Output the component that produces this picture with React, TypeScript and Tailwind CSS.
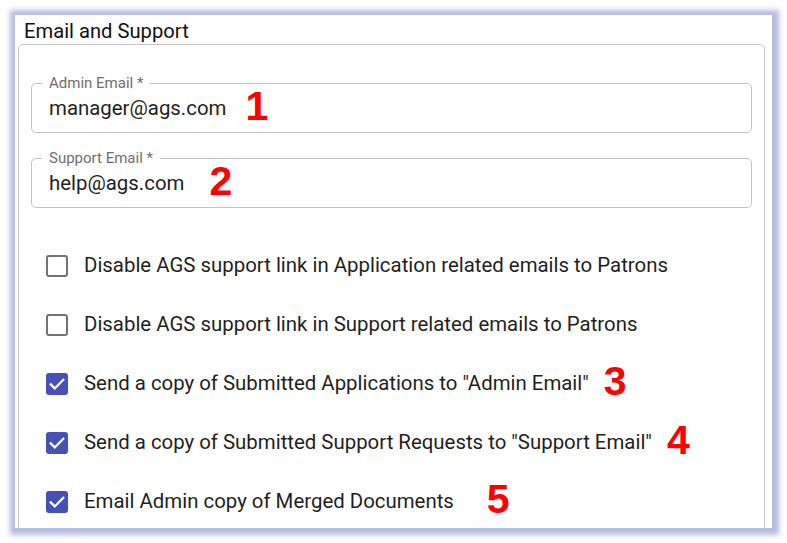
import React from "react";

const font = { fontFamily: "Roboto, 'Liberation Sans', sans-serif" };

function Box({ checked }: { checked: boolean }) {
  if (checked) {
    return (
      <div className="w-[22px] h-[22px] rounded-[3px] bg-[#4750b7] flex items-center justify-center shrink-0">
        <svg width="20" height="20" viewBox="0 0 24 24">
          <path d="M4.5 12.5l4.8 4.8L19.5 7" fill="none" stroke="white" strokeWidth="2.7" strokeLinecap="square" />
        </svg>
      </div>
    );
  }
  return <div className="w-[22px] h-[22px] rounded-[3px] border-2 border-[#737373] shrink-0" />;
}

function Num({ n, ml }: { n: string; ml: string }) {
  return (
    <span
      className={`text-[#ff0000] font-bold text-[41px] leading-none -mt-[4px] ${ml}`}
      style={{ fontFamily: "'Liberation Sans', Arial, sans-serif" }}
    >
      {n}
    </span>
  );
}

function Field({ label, value, num, ml }: { label: string; value: string; num: string; ml: string }) {
  return (
    <div className="relative h-[50px] border border-[#c4c4c4] rounded-[5px] flex items-center pl-[17px]">
      <span className="absolute -top-[10px] left-[10px] px-[7px] bg-white text-[15px] leading-[18px] text-[#6f6f6f]">
        {label}
      </span>
      <span className="text-[20.4px] text-[#1f1f1f] leading-none">{value}</span>
      <Num n={num} ml={ml} />
    </div>
  );
}

function Row({ checked, text, num, ml }: { checked: boolean; text: string; num?: string; ml?: string }) {
  return (
    <div className="h-[59px] flex items-center pl-[15px]">
      <Box checked={checked} />
      <span className="ml-[16px] text-[20.4px] text-[#1f1f1f] leading-none">{text}</span>
      {num && <Num n={num} ml={ml || ""} />}
    </div>
  );
}

export default function App() {
  return (
    <div className="w-[787px] h-[543px] bg-white overflow-hidden pt-[15px] pl-[15px]" style={font}>
      <div className="w-[757px] h-[513px] bg-white shadow-[1px_1px_5px_6px_#b6bbdf] overflow-hidden pl-[3px]">
        <div className="pl-[6px] pt-[4px] text-[20.2px] leading-[24px] text-[#111]">Email and Support</div>
        <div className="mt-[1px] w-[747px] h-[520px] border border-[#c8c8c8] rounded-[5px] px-[12px] pt-[38px]">
          <Field label="Admin Email *" value="manager@ags.com" num="1" ml="ml-[19px]" />
          <div className="h-[25px]" />
          <Field label="Support Email *" value="help@ags.com" num="2" ml="ml-[25px]" />
          <div className="h-[28px]" />
          <Row checked={false} text="Disable AGS support link in Application related emails to Patrons" />
          <Row checked={false} text="Disable AGS support link in Support related emails to Patrons" />
          <Row checked={true} text={'Send a copy of Submitted Applications to "Admin Email"'} num="3" ml="ml-[15px]" />
          <Row checked={true} text={'Send a copy of Submitted Support Requests to "Support Email"'} num="4" ml="ml-[15px]" />
          <Row checked={true} text="Email Admin copy of Merged Documents" num="5" ml="ml-[33px]" />
        </div>
      </div>
    </div>
  );
}
